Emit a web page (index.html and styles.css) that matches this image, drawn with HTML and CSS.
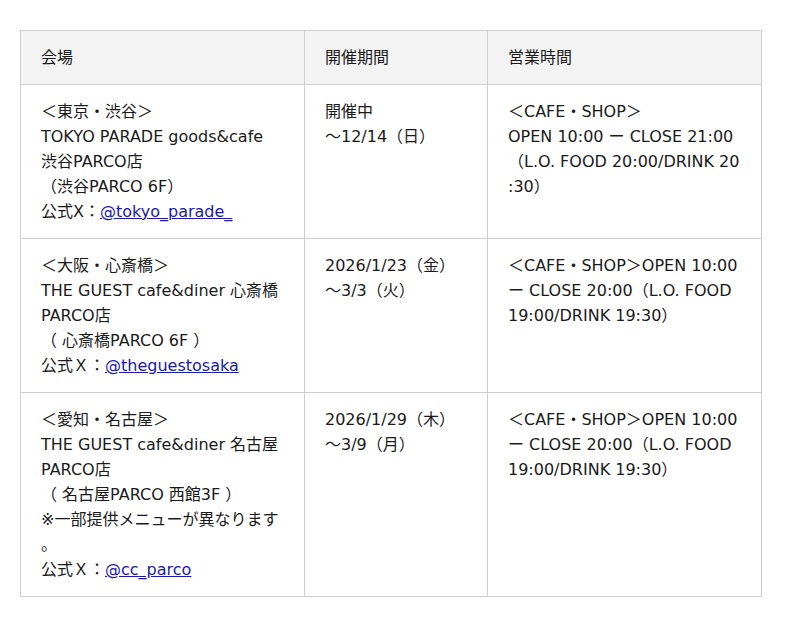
FILE: index.html
```html
<!DOCTYPE html>
<html lang="ja">
<head>
<meta charset="utf-8">
<link rel="stylesheet" href="styles.css">
</head>
<body>
<div class="wrap">
<table class="venues">
  <colgroup>
    <col class="c1"><col class="c2"><col class="c3">
  </colgroup>
  <thead>
    <tr><th>会場</th><th>開催期間</th><th>営業時間</th></tr>
  </thead>
  <tbody>
    <tr>
      <td>＜東京・渋谷＞<br>TOKYO PARADE goods&amp;cafe<br>渋谷PARCO店<br>（渋谷PARCO 6F）<br>公式X：<a href="#">@tokyo_parade_</a></td>
      <td>開催中<br>～12/14（日）</td>
      <td>＜CAFE・SHOP＞<br>OPEN 10:00 ー CLOSE 21:00<br>（L.O. FOOD 20:00/DRINK 20<br>:30）</td>
    </tr>
    <tr>
      <td>＜大阪・心斎橋＞<br>THE GUEST cafe&amp;diner 心斎橋PARCO店<br>（ 心斎橋PARCO 6F ）<br>公式Ｘ：<a href="#">@theguestosaka</a></td>
      <td>2026/1/23（金）<br>～3/3（火）</td>
      <td>＜CAFE・SHOP＞OPEN 10:00 ー CLOSE 20:00（L.O. FOOD 19:00/DRINK 19:30）</td>
    </tr>
    <tr>
      <td>＜愛知・名古屋＞<br>THE GUEST cafe&amp;diner 名古屋PARCO店<br>（ 名古屋PARCO 西館3F ）<br>※一部提供メニューが異なります<br>。<br>公式Ｘ：<a href="#">@cc_parco</a></td>
      <td>2026/1/29（木）<br>～3/9（月）</td>
      <td>＜CAFE・SHOP＞OPEN 10:00 ー CLOSE 20:00（L.O. FOOD 19:00/DRINK 19:30）</td>
    </tr>
  </tbody>
</table>
</div>
</body>
</html>
```

FILE: styles.css
```css
html, body {
  margin: 0;
  padding: 0;
  background: #fff;
}
body {
  font-family: "DejaVu Sans", "Noto Sans CJK JP", sans-serif;
  font-size: 16px;
  line-height: 25px;
  color: #1a1a1a;
}
.wrap {
  padding: 30px 20px;
}
.venues {
  width: 741px;
  border-collapse: collapse;
  table-layout: fixed;
}
.c1 { width: 284px; }
.c2 { width: 183px; }
.c3 { width: 274px; }
.venues th,
.venues td {
  border: 1px solid #cfcfcf;
  padding: 14px 16px 14px 20px;
  text-align: left;
  vertical-align: top;
}
.venues th {
  background: #f3f3f3;
  font-weight: normal;
}
.venues a {
  color: #1a1aa6;
  text-decoration: underline;
}
```
